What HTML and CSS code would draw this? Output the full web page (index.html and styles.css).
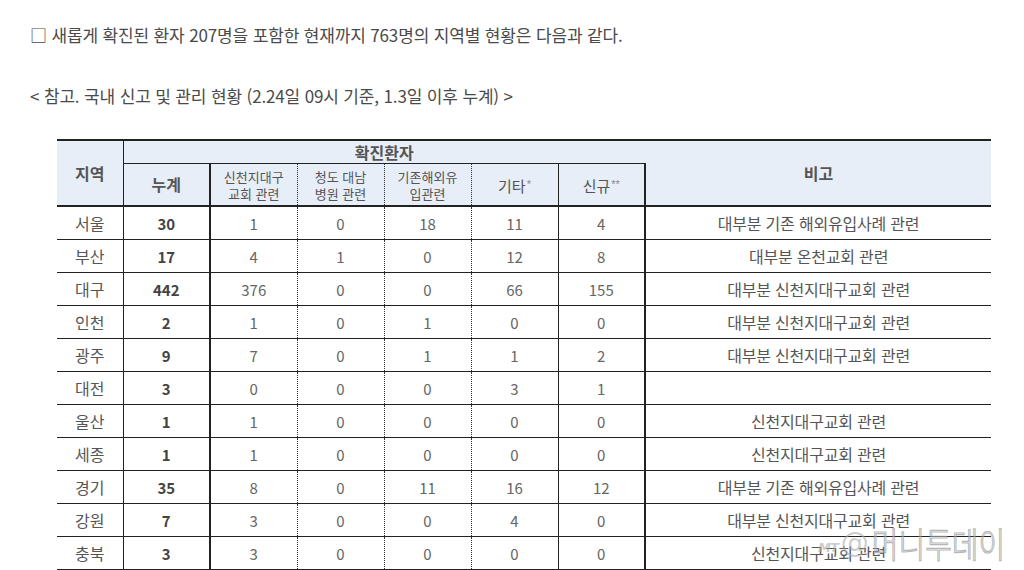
FILE: index.html
```html
<!DOCTYPE html>
<html lang="ko">
<head>
<meta charset="utf-8">
<link rel="stylesheet" href="styles.css">
</head>
<body>
<div class="page">
  <p class="lead">□ 새롭게 확진된 환자 207명을 포함한 현재까지 763명의 지역별 현황은 다음과 같다.</p>
  <p class="note">&lt; 참고. 국내 신고 및 관리 현황 (2.24일 09시 기준, 1.3일 이후 누계) &gt;</p>
  <table class="stats">
    <colgroup>
      <col class="c-region"><col class="c-num"><col class="c-num"><col class="c-num"><col class="c-num"><col class="c-num"><col class="c-num"><col class="c-note">
    </colgroup>
    <thead>
      <tr class="h1">
        <th rowspan="2" class="region">지역</th>
        <th colspan="6" class="group">확진환자</th>
        <th rowspan="2" class="remark">비고</th>
      </tr>
      <tr class="h2">
        <th class="total">누계</th>
        <th class="sub dot">신천지대구<br>교회 관련</th>
        <th class="sub dot">청도 대남<br>병원 관련</th>
        <th class="sub dot">기존해외유<br>입관련</th>
        <th class="sub solid">기타<span class="star">*</span></th>
        <th class="sub last">신규<span class="star">**</span></th>
      </tr>
    </thead>
    <tbody>
      <tr><td class="region">서울</td><td class="total">30</td><td class="dot">1</td><td class="dot">0</td><td class="dot">18</td><td class="solid">11</td><td class="last">4</td><td class="remark">대부분 기존 해외유입사례 관련</td></tr>
      <tr><td class="region">부산</td><td class="total">17</td><td class="dot">4</td><td class="dot">1</td><td class="dot">0</td><td class="solid">12</td><td class="last">8</td><td class="remark">대부분 온천교회 관련</td></tr>
      <tr><td class="region">대구</td><td class="total">442</td><td class="dot">376</td><td class="dot">0</td><td class="dot">0</td><td class="solid">66</td><td class="last">155</td><td class="remark">대부분 신천지대구교회 관련</td></tr>
      <tr><td class="region">인천</td><td class="total">2</td><td class="dot">1</td><td class="dot">0</td><td class="dot">1</td><td class="solid">0</td><td class="last">0</td><td class="remark">대부분 신천지대구교회 관련</td></tr>
      <tr><td class="region">광주</td><td class="total">9</td><td class="dot">7</td><td class="dot">0</td><td class="dot">1</td><td class="solid">1</td><td class="last">2</td><td class="remark">대부분 신천지대구교회 관련</td></tr>
      <tr><td class="region">대전</td><td class="total">3</td><td class="dot">0</td><td class="dot">0</td><td class="dot">0</td><td class="solid">3</td><td class="last">1</td><td class="remark"></td></tr>
      <tr><td class="region">울산</td><td class="total">1</td><td class="dot">1</td><td class="dot">0</td><td class="dot">0</td><td class="solid">0</td><td class="last">0</td><td class="remark">신천지대구교회 관련</td></tr>
      <tr><td class="region">세종</td><td class="total">1</td><td class="dot">1</td><td class="dot">0</td><td class="dot">0</td><td class="solid">0</td><td class="last">0</td><td class="remark">신천지대구교회 관련</td></tr>
      <tr><td class="region">경기</td><td class="total">35</td><td class="dot">8</td><td class="dot">0</td><td class="dot">11</td><td class="solid">16</td><td class="last">12</td><td class="remark">대부분 기존 해외유입사례 관련</td></tr>
      <tr><td class="region">강원</td><td class="total">7</td><td class="dot">3</td><td class="dot">0</td><td class="dot">0</td><td class="solid">4</td><td class="last">0</td><td class="remark">대부분 신천지대구교회 관련</td></tr>
      <tr><td class="region">충북</td><td class="total">3</td><td class="dot">3</td><td class="dot">0</td><td class="dot">0</td><td class="solid">0</td><td class="last">0</td><td class="remark">신천지대구교회 관련</td></tr>
    </tbody>
  </table>
  <div class="watermark"><span class="wm-mt">MT</span><span class="wm-at">@</span><span class="wm-name">머니투데이</span></div>
</div>
</body>
</html>
```
FILE: styles.css
```css
html, body {
  margin: 0;
  padding: 0;
  background: #fff;
}
body {
  font-family: "Noto Sans CJK KR", "Noto Sans", sans-serif;
  color: #555;
}
.page {
  position: relative;
  width: 1024px;
  height: 570px;
  overflow: hidden;
}
.lead {
  margin: 0;
  padding: 22px 0 0 30px;
  font-size: 17px;
  line-height: 26px;
  letter-spacing: -0.15px;
  color: #4a4a4a;
}
.note {
  margin: 0;
  padding: 35px 0 0 30px;
  font-size: 17px;
  line-height: 26px;
  letter-spacing: -0.15px;
  color: #4a4a4a;
}
.stats {
  margin: 30px 0 0 57px;
  width: 934px;
  border-collapse: collapse;
  table-layout: fixed;
  border-top: 2px solid #222;
}
.c-region { width: 66px; }
.c-num { width: 87px; }
.c-note { width: 346px; }
.stats th, .stats td {
  padding: 0;
  text-align: center;
  vertical-align: middle;
}
.stats thead th {
  background: #e7eef8;
  font-weight: normal;
  color: #555;
  font-size: 13px;
  line-height: 17px;
}
.stats thead tr.h1 th { height: 22px; }
.stats thead tr.h2 th {
  height: 41px;
  border-top: 1px solid #222;
  border-bottom: 2px solid #222;
}
.stats thead th.region,
.stats thead th.remark {
  border-bottom: 2px solid #222;
  font-size: 16px;
  font-weight: bold;
}
.stats thead th.group {
  font-size: 16px;
  font-weight: bold;
  border-bottom: 1px solid #222;
}
.stats thead th.total {
  font-size: 16px;
  font-weight: bold;
}
.stats .region { border-right: 1px solid #222; }
.stats .total { border-right: 2px solid #222; }
.stats .dot { border-right: 1px dotted #333; }
.stats .solid { border-right: 1px solid #222; }
.stats .last { border-right: 2px solid #222; }
.stats thead th.solid, .stats thead th.last { font-size: 15px; }
.star {
  font-family: "Liberation Sans", sans-serif;
  font-size: 11px;
  color: #888;
  vertical-align: 4px;
  margin-left: 1px;
}
.stats tbody td {
  height: 32px;
  border-bottom: 1px solid #222;
  font-size: 15px;
  color: #666;
}
.stats tbody td.region {
  font-size: 16px;
  color: #555;
}
.stats tbody td.total {
  font-weight: bold;
  color: #444;
}
.stats tbody td.remark {
  font-size: 16px;
  color: #555;
  letter-spacing: -0.2px;
}
.watermark {
  position: absolute;
  left: 818px;
  top: 522px;
  display: flex;
  align-items: center;
  color: rgba(170, 170, 170, 0.6);
  pointer-events: none;
}
.wm-mt {
  font-family: "DejaVu Sans", sans-serif;
  font-size: 13px;
  font-weight: bold;
  font-style: italic;
  letter-spacing: -1px;
  margin-top: 10px;
}
.wm-at {
  font-family: "DejaVu Sans", sans-serif;
  font-size: 28px;
  margin: 0 3px 0 3px;
}
.wm-name {
  font-family: "Noto Sans CJK KR", sans-serif;
  font-size: 29px;
  line-height: 40px;
  font-weight: 300;
  letter-spacing: 0;
  display: inline-block;
  transform: scaleY(1.2);
  color: rgba(255, 255, 255, 0.25);
  -webkit-text-stroke: 1px rgba(150, 150, 150, 0.7);
}
```
